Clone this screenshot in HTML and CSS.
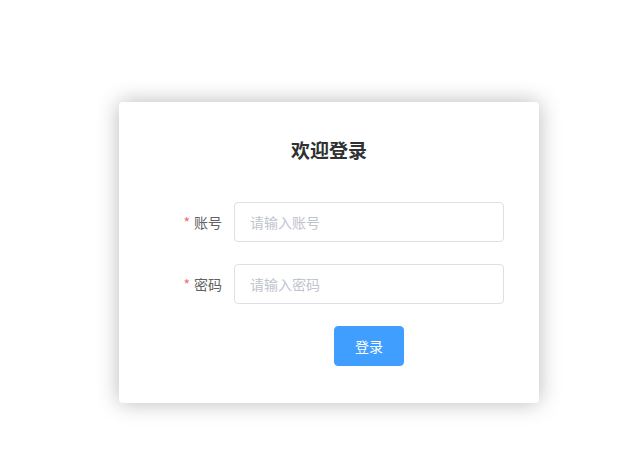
FILE: index.html
```html
<!DOCTYPE html>
<html lang="zh-CN">
<head>
    <meta charset="UTF-8">
    <meta name="viewport" content="width=device-width, initial-scale=1.0">
    <title>登录</title>
    <link rel="stylesheet" href="styles.css">
</head>
<body>
    <div class="login-page">
        <div class="login-card">
            <h3 class="login-title">欢迎登录</h3>

            <form class="login-form">
                <div class="form-item">
                    <label class="form-label is-required" for="username">账号</label>
                    <div class="form-content">
                        <input class="form-input" type="text" id="username" placeholder="请输入账号">
                    </div>
                </div>

                <div class="form-item">
                    <label class="form-label is-required" for="password">密码</label>
                    <div class="form-content">
                        <input class="form-input" type="password" id="password" placeholder="请输入密码">
                    </div>
                </div>

                <div class="form-item form-actions">
                    <div class="form-label"></div>
                    <div class="form-content">
                        <button type="button" class="login-btn">登录</button>
                    </div>
                </div>
            </form>
        </div>
    </div>
</body>
</html>
```

FILE: styles.css
```css
* {
    margin: 0;
    padding: 0;
    box-sizing: border-box;
}

html,
body {
    height: 100%;
}

body {
    font-family: "Noto Sans CJK SC", "Noto Sans", sans-serif;
    background: #fff;
    color: #606266;
    overflow: hidden;
}

.login-page {
    min-height: 100%;
    padding: 102px 0 0 119px;
}

.login-card {
    width: 420px;
    height: 301px;
    background: #fff;
    border-radius: 4px;
    box-shadow: 0 0 22px rgba(0, 0, 0, 0.28);
    padding: 33px 35px 37px;
}

.login-title {
    text-align: center;
    color: #303133;
    font-size: 19px;
    font-weight: bold;
    line-height: 30px;
    margin-bottom: 37px;
}

.form-item {
    display: flex;
    margin-bottom: 22px;
}

.form-item:last-child {
    margin-bottom: 0;
}

.form-label {
    width: 80px;
    flex-shrink: 0;
    text-align: right;
    padding-right: 12px;
    font-size: 14px;
    line-height: 40px;
    color: #606266;
}

.form-label.is-required::before {
    content: "*";
    color: #f56c6c;
    margin-right: 4px;
}

.form-content {
    flex: 1;
}

.form-input {
    width: 100%;
    height: 40px;
    padding: 0 15px;
    border: 1px solid #dcdfe6;
    border-radius: 4px;
    font-family: inherit;
    font-size: 14px;
    color: #606266;
    outline: none;
}

.form-input::placeholder {
    color: #c0c4cc;
}

.form-actions .form-content {
    display: flex;
    justify-content: center;
}

.login-btn {
    width: 70px;
    height: 40px;
    background: #409eff;
    border: 1px solid #409eff;
    border-radius: 4px;
    color: #fff;
    font-family: inherit;
    font-size: 14px;
    cursor: pointer;
}
```
